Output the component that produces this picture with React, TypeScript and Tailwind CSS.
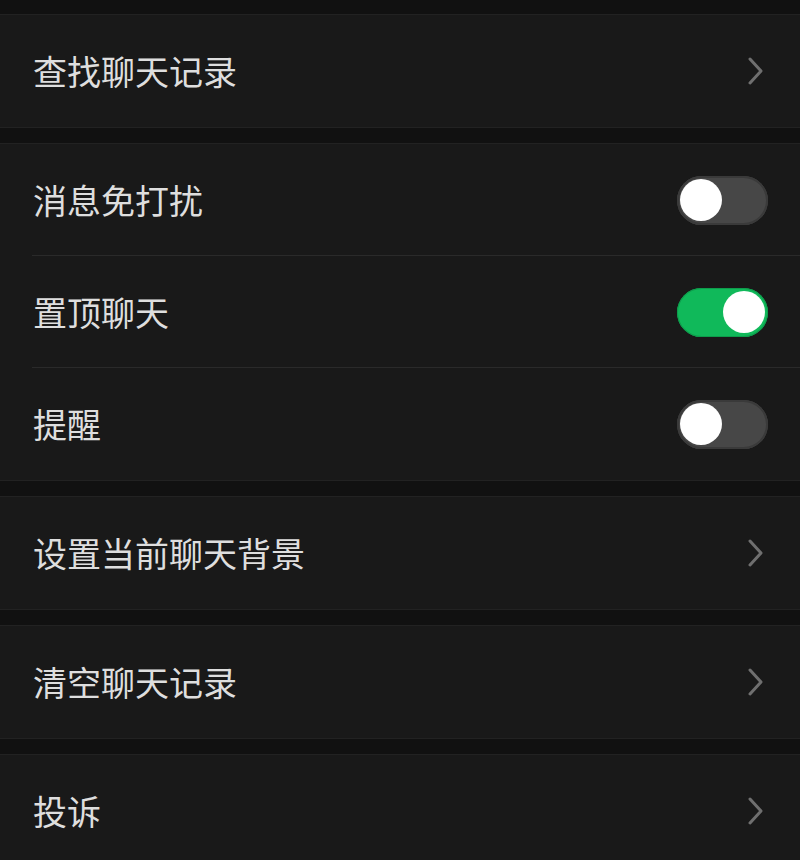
const font = { fontFamily: '"Noto Sans CJK SC", "Noto Sans", sans-serif' };

function Chevron() {
  return (
    <svg width="18" height="28" viewBox="0 0 18 28" fill="none" className="mr-[35px]">
      <path d="M3 2 L14 14 L3 26" stroke="#6f6f6f" strokeWidth="3" strokeLinecap="round" strokeLinejoin="round" />
    </svg>
  );
}

function Toggle({ on }: { on: boolean }) {
  return (
    <div
      className={
        on
          ? 'mr-[32px] flex h-[49px] w-[91px] items-center justify-end rounded-full bg-[#10b95a] px-[3px] shadow-[inset_0_0_0_1px_#0e9c4c]'
          : 'mr-[32px] flex h-[49px] w-[91px] items-center justify-start rounded-full bg-[#474747] px-[3px] shadow-[inset_0_0_0_2px_#3a3a3a]'
      }
    >
      <div className="h-[42px] w-[42px] rounded-full bg-white" />
    </div>
  );
}

function Row({ label, right, divider }: { label: string; right: React.ReactNode; divider?: boolean }) {
  return (
    <div className="relative flex h-[112px] items-center justify-between pl-[33px]">
      <span className="text-[34px] leading-none text-[#dedede]">{label}</span>
      {right}
      {divider && <div className="absolute bottom-0 left-[32px] right-0 h-px bg-[#2a2a2a]" />}
    </div>
  );
}

function Section({ children }: { children: React.ReactNode }) {
  return <div className="border-y border-[#222222] bg-[#191919]">{children}</div>;
}

export default function App() {
  return (
    <div className="flex h-[860px] w-[800px] flex-col gap-[15px] overflow-hidden bg-[#111111] pt-[14px]" style={font}>
      <Section>
        <Row label="查找聊天记录" right={<Chevron />} />
      </Section>
      <Section>
        <Row label="消息免打扰" right={<Toggle on={false} />} divider />
        <Row label="置顶聊天" right={<Toggle on />} divider />
        <Row label="提醒" right={<Toggle on={false} />} />
      </Section>
      <Section>
        <Row label="设置当前聊天背景" right={<Chevron />} />
      </Section>
      <Section>
        <Row label="清空聊天记录" right={<Chevron />} />
      </Section>
      <Section>
        <Row label="投诉" right={<Chevron />} />
      </Section>
    </div>
  );
}
